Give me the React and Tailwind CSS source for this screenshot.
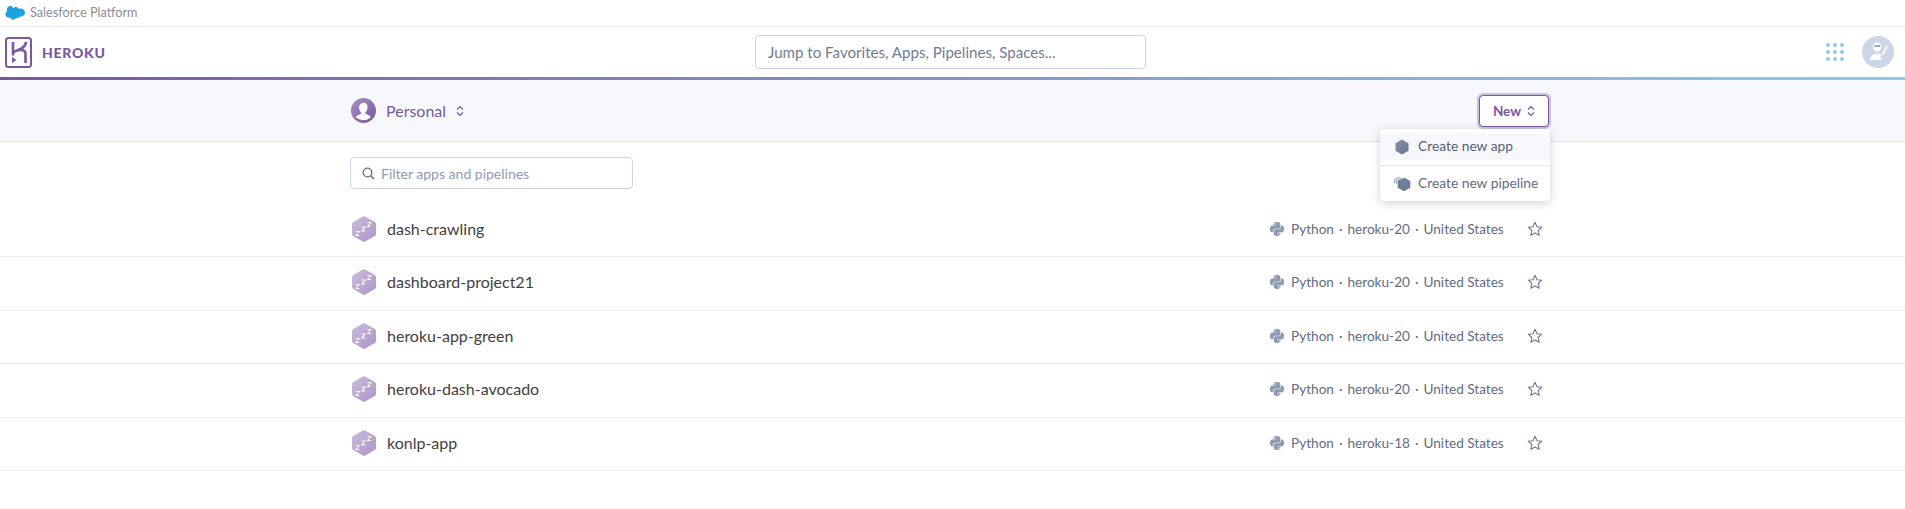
import React from "react";
import { FaPython } from "react-icons/fa";

const apps = [
  ["dash-crawling", "heroku-20"],
  ["dashboard-project21", "heroku-20"],
  ["heroku-app-green", "heroku-20"],
  ["heroku-dash-avocado", "heroku-20"],
  ["konlp-app", "heroku-18"],
];

function SleepHex() {
  return (
    <svg width="24" height="26" viewBox="0 0 24 26" className="shrink-0">
      <defs>
        <linearGradient id="hexg" x1="0" y1="0" x2="1" y2="1">
          <stop offset="0" stopColor="#cbbcdf" />
          <stop offset="1" stopColor="#ab94c6" />
        </linearGradient>
      </defs>
      <path d="M10.800 0.600 Q12 0 13.200 0.600 L22.800 5.900 Q24 6.600 24 8 V18 Q24 19.400 22.800 20.100 L13.200 25.400 Q12 26 10.800 25.400 L1.200 20.100 Q0 19.400 0 18 V8 Q0 6.600 1.200 5.900 Z" fill="url(#hexg)" />
      <g fill="none" stroke="#fff" strokeWidth="1.100" strokeLinejoin="round">
        <path d="M3.800 15.500 h3.600 l-3.600 4 h3.600" />
        <path d="M9.600 11 h3.600 l-3.600 4 h3.600" />
        <path d="M15.400 6.500 h3.600 l-3.600 4 h3.600" />
      </g>
    </svg>
  );
}

function Star() {
  return (
    <svg width="16" height="16" viewBox="0 0 16 16" className="shrink-0">
      <path d="M8 1.200l2 4.500 4.800.5-3.600 3.300 1 4.800L8 11.900l-4.200 2.400 1-4.800L1.200 6.200 6 5.700z" fill="none" stroke="#6b7a96" strokeWidth="1.100" strokeLinejoin="round" />
    </svg>
  );
}

function Chevrons({ color = "#79589f" }) {
  return (
    <svg width="8" height="12" viewBox="0 0 8 12" className="shrink-0">
      <path d="M1 4.500 L4 1.500 L7 4.500 M1 7.500 L4 10.500 L7 7.500" fill="none" stroke={color} strokeWidth="1.200" />
    </svg>
  );
}

function GridDots() {
  return (
    <div className="grid grid-cols-3 gap-[3px] w-[18px]">
      {Array.from({ length: 9 }).map((_, i) => (
        <span key={i} className="w-[4px] h-[4px] rounded-full bg-[#8ecbe9]" />
      ))}
    </div>
  );
}

function HexSmall() {
  return (
    <svg width="14" height="16" viewBox="0 0 14 16" className="shrink-0">
      <defs>
        <linearGradient id="hexs" x1="0" y1="0" x2="1" y2="1">
          <stop offset="0" stopColor="#8492ad" />
          <stop offset="1" stopColor="#67758f" />
        </linearGradient>
      </defs>
      <path d="M7 0.500 L13.500 4.200 V11.800 L7 15.500 L0.500 11.800 V4.200 Z" fill="url(#hexs)" />
    </svg>
  );
}

function HexStack() {
  return (
    <svg width="17" height="16" viewBox="0 0 17 16" className="shrink-0">
      <path d="M0.600 7 V3.400 L4.200 1 M2.300 8 V4 L5.800 1.200 M4 6 V4.700 L7.800 1.500" fill="none" stroke="#8d9bb3" strokeWidth="0.900" />
      <path d="M10 1.800 L16.300 5 V11.800 L10 15.300 L3.700 11.800 V5 Z" fill="#6f7d98" />
    </svg>
  );
}

export default function App() {
  return (
    <div className="min-h-[509px] bg-white font-['Lato','Open_Sans',sans-serif] overflow-hidden">
      {/* Salesforce strip */}
      <div className="h-[27px] flex items-center pl-[5px] border-b border-[#eff0f3]">
        <svg width="20" height="14" viewBox="0 0 20 14" className="mr-[5px]">
          <path fill="#1ea1e0" d="M8.200 2.200C8.900 1.400 9.800 1 10.900 1c1.400 0 2.600.8 3.200 1.900.5-.2 1.100-.4 1.700-.4C18 2.500 20 4.300 20 6.600s-2 4.100-4.200 4.100c-.3 0-.5 0-.8-.1-.5.9-1.500 1.500-2.600 1.500-.5 0-.9-.1-1.300-.3-.5 1.100-1.700 1.900-3 1.900-1.400 0-2.600-.9-3.100-2.100-.2 0-.4.1-.6.1C2 11.700.4 10.200.4 8.300c0-1.300.7-2.400 1.700-3-.2-.5-.3-1-.3-1.500C1.800 1.700 3.500 0 5.600 0c1.100 0 2 .9 2.600 2.200z" />
        </svg>
        <span className="text-[12.700px] text-[#8a8f98]">Salesforce Platform</span>
      </div>

      {/* Heroku nav */}
      <div className="h-[50px] flex items-center pl-[5px] pr-[11px]">
        <svg width="27" height="31" viewBox="0 0 27 31" className="mr-[10px] shrink-0">
          <rect x="1" y="1" width="25" height="29" rx="2.500" fill="none" stroke="#79589f" strokeWidth="2" />
          <path d="M8 5 V18.500" fill="none" stroke="#79589f" strokeWidth="2.600" />
          <path d="M21 5 C20.500 8.500 18.500 10.500 15.500 12 C13 13.300 10 14 8 15.500 M10 14.300 C14 12.500 20.500 12 20.500 16.500 V26" fill="none" stroke="#79589f" strokeWidth="2.600" />
          <path d="M7 20 L11.500 23 L7 26 Z" fill="#79589f" />
        </svg>
        <span className="w-[64px] text-[14px] font-black tracking-[0.05em] text-[#79589f]">HEROKU</span>
        <div className="flex-1 flex">
          <div className="ml-[649px] w-[391px] h-[34px] flex items-center px-[12px] border border-[#ccd3e6] rounded-[4px] text-[15.100px] text-[#6f7c95] bg-white">
            Jump to Favorites, Apps, Pipelines, Spaces...
          </div>
        </div>
        <GridDots />
        <div className="ml-[18px] w-[32px] h-[32px] rounded-full bg-[#cdd6e6] flex items-center justify-center">
          <svg width="22" height="22" viewBox="0 0 22 22">
            <path fill="#fff" d="M6.500 4c0-1.500 1.800-2.500 3.700-2.500S14 2.500 14 4v3c0 2-1.700 3.500-3.700 3.500S6.500 9 6.500 7z" />
            <path fill="#7d8aa3" d="M7.300 4.300h5.800v1.500H7.300z" />
            <path fill="#fff" d="M3 19c0-3.500 3-6 6-6.500l1.500 1.500 1.500-1.500c1 .2 1.600.5 2.300.9l-1.300 3.100 1.500 1V19z" />
            <path fill="none" stroke="#fff" strokeWidth="1.800" d="M20 5l-4.500 9" />
          </svg>
        </div>
      </div>
      <div className="h-[3px] bg-gradient-to-r from-[#79589f] via-[#8496c4] to-[#8ecbe9]" />

      {/* Sub header */}
      <div className="h-[62px] bg-[#f7f8fb] border-b border-[#e3e6ee] pl-[351px] flex items-center relative">
        <div className="w-[25px] h-[25px] rounded-full bg-gradient-to-br from-[#a78fc4] to-[#79589f] flex items-center justify-center overflow-hidden">
          <svg width="25" height="25" viewBox="0 0 26 26">
            <path fill="#fff" d="M13 5c-3 0-4.600 2.300-4.600 5.200 0 2 .9 3.700 2.100 4.700v1.500c-2.400.8-4.800 1.900-5.500 3.600A11 11 0 0 0 13 23c2.900 0 5.500-1.100 7.500-3-.7-1.700-3.100-2.800-5.500-3.600v-1.500c1.200-1 2.100-2.700 2.100-4.700C17.600 7.300 16 5 13 5z" />
          </svg>
        </div>
        <span className="ml-[10px] text-[16px] text-[#79589f]">Personal</span>
        <span className="ml-[10px] flex"><Chevrons /></span>
        <div className="absolute left-[1479px] top-[15px] w-[70px] h-[32px] rounded-[4px] bg-white border border-[#79589f] ring-2 ring-[#cfc0e3] flex items-center justify-center gap-[6px] text-[13.500px] font-bold text-[#79589f]">
          New <Chevrons />
        </div>
      </div>

      {/* Dropdown */}
      <div className="relative">
        <div className="absolute z-10 left-[1380px] top-[-13px] w-[170px] h-[72px] bg-white rounded-[4px] shadow-[0_2px_10px_rgba(60,70,100,0.25)] flex flex-col text-[13.800px] text-[#5f6c85]">
          <div className="h-[27px] mt-[4px] bg-[#f7f8fb] flex items-center pl-[15px] gap-[9px] text-[#56627a]">
            <HexSmall />
            <span>Create new app</span>
          </div>
          <div className="h-px mt-[5px] bg-[#e3e6ee]" />
          <div className="flex-1 flex items-center pl-[14px] gap-[7px]">
            <HexStack />
            <span>Create new pipeline</span>
          </div>
        </div>
      </div>

      {/* Filter */}
      <div className="pl-[350px] pt-[15px]">
        <div className="w-[283px] h-[32px] flex items-center border border-[#ccd3e6] rounded-[4px] pl-[11px] gap-[6px] text-[14px] text-[#8d9bb3]">
          <svg width="13" height="13" viewBox="0 0 13 13" className="shrink-0">
            <circle cx="5.500" cy="5.500" r="4.300" fill="none" stroke="#5f6c85" strokeWidth="1.300" />
            <path d="M8.700 8.700 L12 12" stroke="#5f6c85" strokeWidth="1.500" />
          </svg>
          <span>Filter apps and pipelines</span>
        </div>
      </div>

      {/* Rows */}
      <div className="mt-[14.500px]">
        {apps.map(([name, stack]) => (
          <div key={name} className="h-[53.500px] border-b border-[#eceef2] pl-[352px] pb-[2px] flex items-center">
            <SleepHex />
            <span className="ml-[11px] text-[16px] text-[#3f3f44]">{name}</span>
            <div className="ml-auto mr-[362px] w-[274px] flex items-center text-[13.600px] text-[#5f6c85]">
              <FaPython size={16} color="#8d9bb3" className="shrink-0" />
              <span className="ml-[6px]">Python</span>
              <span className="mx-[5px]">·</span>
              <span>{stack}</span>
              <span className="mx-[5px]">·</span>
              <span>United States</span>
              <span className="ml-auto"><Star /></span>
            </div>
          </div>
        ))}
      </div>
    </div>
  );
}
